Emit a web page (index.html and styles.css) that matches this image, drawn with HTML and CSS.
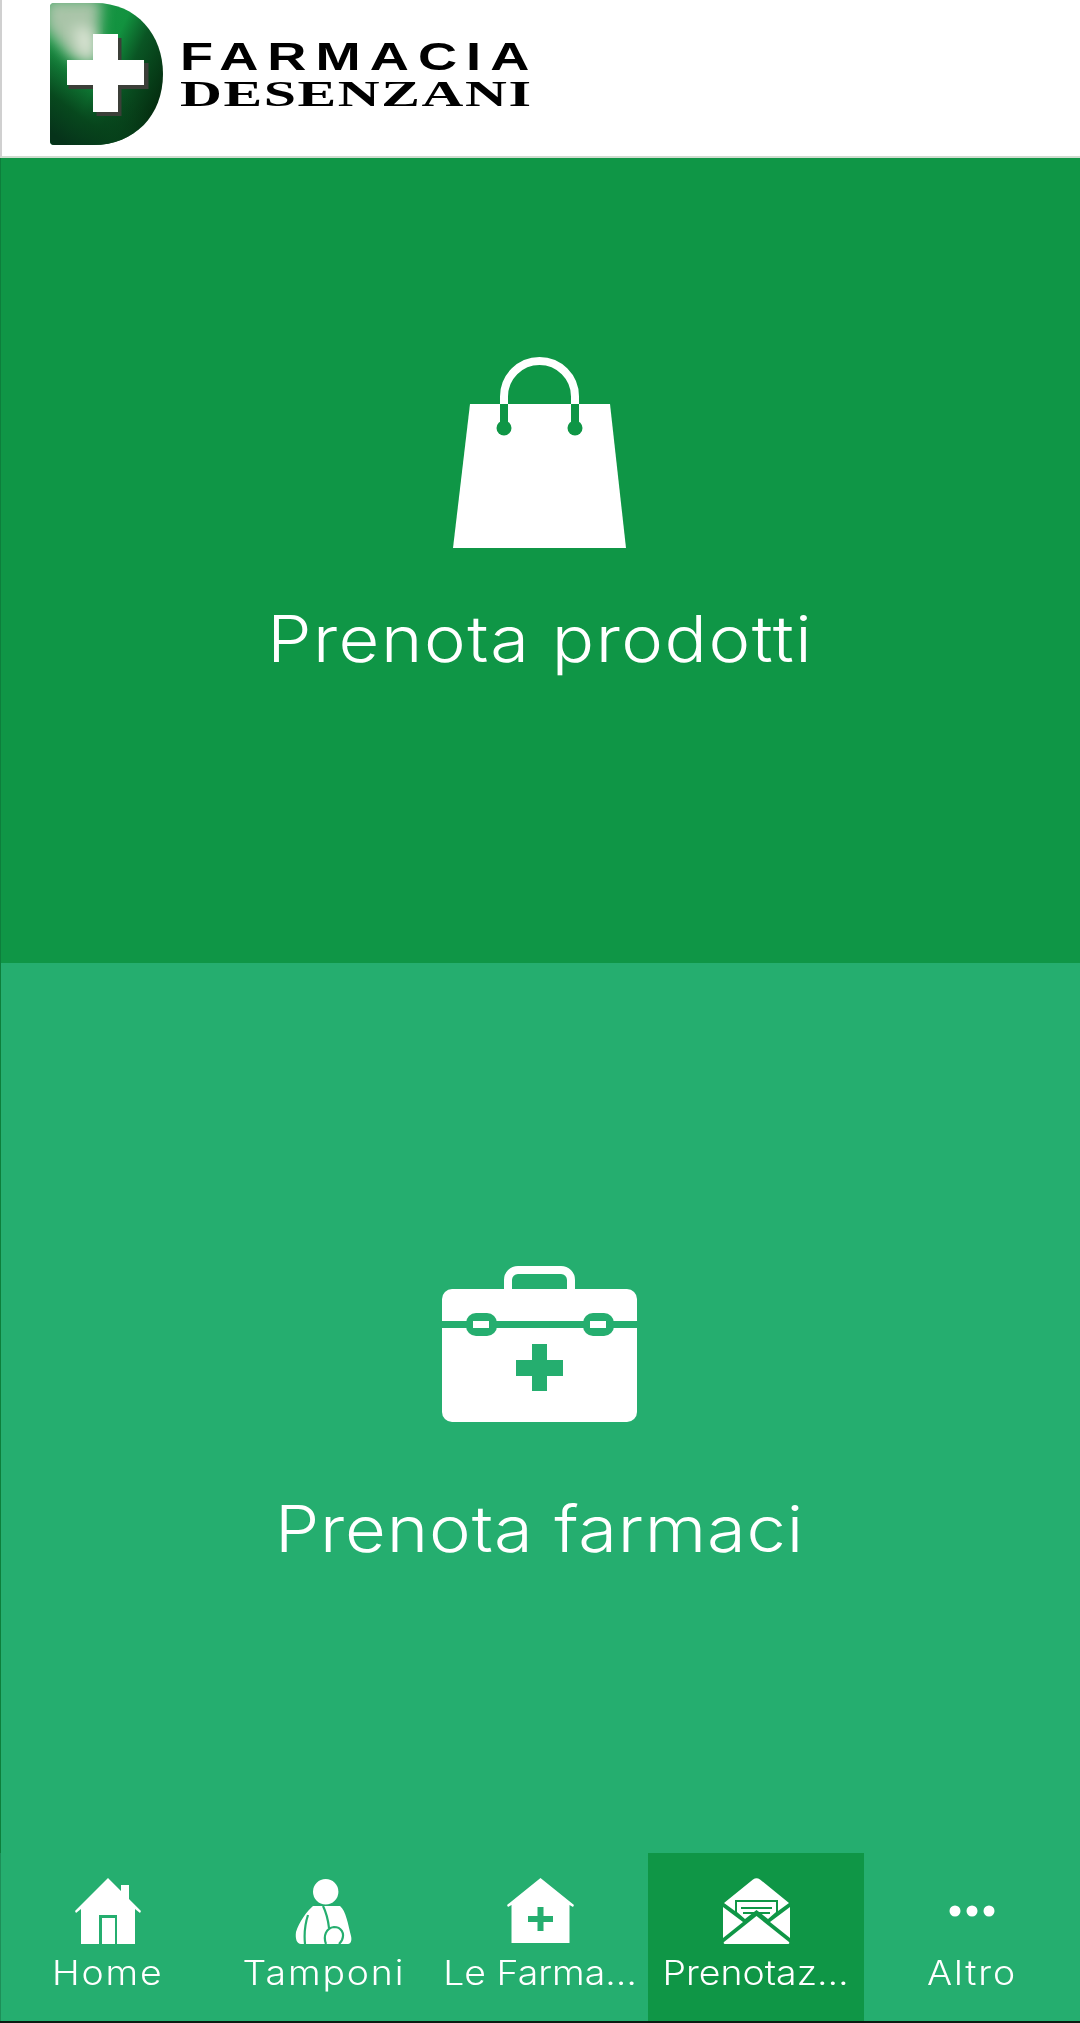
FILE: index.html
```html
<!DOCTYPE html>
<html lang="it">
<head>
    <meta charset="UTF-8">
    <meta name="viewport" content="width=device-width, initial-scale=1.0">
    <title>Farmacia Desenzani</title>
    <link rel="stylesheet" href="styles.css">
</head>
<body>
    <div class="app">
        <header class="top-bar">
            <svg class="logo-mark" viewBox="0 0 115 142">
                <defs>
                    <linearGradient id="dBase" x1="0" y1="0.1" x2="1" y2="0.7">
                        <stop offset="0" stop-color="#1c9a49"/>
                        <stop offset="0.5" stop-color="#12923f"/>
                        <stop offset="0.68" stop-color="#0a5524"/>
                        <stop offset="1" stop-color="#042a0e"/>
                    </linearGradient>
                    <linearGradient id="dFoot" x1="0.45" y1="0.5" x2="0.15" y2="1">
                        <stop offset="0" stop-color="#06401a" stop-opacity="0"/>
                        <stop offset="0.6" stop-color="#06401a" stop-opacity="0.9"/>
                        <stop offset="1" stop-color="#06331a"/>
                    </linearGradient>
                    <clipPath id="dClip">
                        <path d="M1 4a4 4 0 0 1 4-4H46C88 0 114 32 114 71C114 112 86 142 44 142H5a4 4 0 0 1-4-4Z"/>
                    </clipPath>
                    <filter id="soft" x="-50%" y="-50%" width="200%" height="200%">
                        <feGaussianBlur stdDeviation="7"/>
                    </filter>
                </defs>
                <path d="M1 4a4 4 0 0 1 4-4H46C88 0 114 32 114 71C114 112 86 142 44 142H5a4 4 0 0 1-4-4Z" fill="url(#dBase)"/>
                <path d="M1 4a4 4 0 0 1 4-4H46C88 0 114 32 114 71C114 112 86 142 44 142H5a4 4 0 0 1-4-4Z" fill="url(#dFoot)"/>
                <g clip-path="url(#dClip)">
                    <path d="M-4 -4H52L48 62L22 56L-4 24Z" fill="#a9c4a8" filter="url(#soft)"/>
                    <path d="M24 22L44 28L44 60L30 50Z" fill="#dbe5d5" filter="url(#soft)"/>
                </g>
                <path d="M46 33V58H18V84H46V111H71V84H98V58H71V33Z" fill="#3b3f38" transform="translate(1.5 2)"/>
                <path d="M44 31V57H18V82H44V109H69V82H95V57H69V31Z" fill="#fff"/>
            </svg>
            <div class="logo-text">
                <span class="logo-line1">FARMACIA</span>
                <span class="logo-line2">DESENZANI</span>
            </div>
        </header>

        <main class="panels">
            <a class="panel panel-products">
                <svg class="bag-icon" viewBox="0 0 173 191">
                    <path d="M17 47H157L173 191H0Z" fill="#fff"/>
                    <path d="M51 47V39.5A35.5 35.5 0 0 1 122 39.5V47" fill="none" stroke="#fff" stroke-width="8"/>
                    <rect x="47" y="47" width="8" height="24" fill="#0f9646"/>
                    <rect x="118" y="47" width="8" height="24" fill="#0f9646"/>
                    <circle cx="51" cy="71" r="7.5" fill="#0f9646"/>
                    <circle cx="122" cy="71" r="7.5" fill="#0f9646"/>
                </svg>
                <span class="panel-title">Prenota prodotti</span>
            </a>
            <a class="panel panel-drugs">
                <svg class="case-icon" viewBox="0 0 195 156">
                    <path d="M66 23V14a10 10 0 0 1 10-10H119a10 10 0 0 1 10 10V23" fill="none" stroke="#fff" stroke-width="8"/>
                    <rect y="23" width="195" height="133" rx="10" fill="#fff"/>
                    <rect y="55" width="195" height="7" fill="#25ae6f"/>
                    <rect x="24" y="47" width="31" height="23" rx="10" fill="#25ae6f"/>
                    <rect x="141" y="47" width="31" height="23" rx="10" fill="#25ae6f"/>
                    <rect x="31" y="55" width="16" height="7" fill="#fff"/>
                    <rect x="148" y="55" width="16" height="7" fill="#fff"/>
                    <path d="M90 78H105V94H121V110H105V125H90V110H74V94H90Z" fill="#25ae6f"/>
                </svg>
                <span class="panel-title">Prenota farmaci</span>
            </a>
        </main>

        <nav class="tabs">
            <a class="tab">
                <svg class="tab-icon" viewBox="0 0 66 66">
                    <path d="M33 0L46 13V7H54V21L66 33L65 35L60 31V66H6V31L1 35L0 33Z" fill="#fff"/>
                    <path d="M24 66V37H42V66H40V40H27V66Z" fill="#25ae6f"/>
                </svg>
                <span class="tab-label">Home</span>
            </a>
            <a class="tab">
                <svg class="tab-icon" viewBox="0 0 58 66">
                    <circle cx="30.7" cy="13.7" r="12.7" fill="#fff"/>
                    <path d="M18 28H45C51 33 53 46 56 58C57 62 56 66 53 66H6C2 66 0 61 1 54C4 44 12 33 18 28Z" fill="#fff"/>
                    <path d="M13 37C10 46 9 56 10 66" fill="none" stroke="#25ae6f" stroke-width="2.2"/>
                    <path d="M28 28C31 34 33 41 34 50" fill="none" stroke="#25ae6f" stroke-width="2.2"/>
                    <path d="M31 66C28 58 31 50 39 49C46 49 50 55 47 62C46 64 45 65 44 66" fill="none" stroke="#25ae6f" stroke-width="2.2"/>
                </svg>
                <span class="tab-label">Tamponi</span>
            </a>
            <a class="tab">
                <svg class="tab-icon" viewBox="0 0 67 66">
                    <path d="M33.5 0L67 27L66 29L62.5 27V65H4.5V27L1 29L0 27Z" fill="#fff"/>
                    <path d="M30.5 29H36.5V38H46V44H36.5V53H30.5V44H21V38H30.5Z" fill="#25ae6f"/>
                </svg>
                <span class="tab-label tab-label-cut">Le Farma…</span>
            </a>
            <a class="tab tab-active">
                <svg class="tab-icon" viewBox="0 0 67 66">
                    <path d="M30 1.5Q33.5 -1 37 1.5L66 25L55 33V22H12V33L1 25Z" fill="#fff"/>
                    <path d="M14 24H53V34L45 41L33.5 32L22 41L14 34Z" fill="#fff"/>
                    <path d="M18 30H49M20 35H47" stroke="#0f9646" stroke-width="2.2"/>
                    <path d="M0 29L20 44L0 60ZM67 29L47 44L67 60Z" fill="#fff"/>
                    <path d="M2 66Q0 66 1 64L33.5 38L66 64Q67 66 65 66Z" fill="#fff"/>
                </svg>
                <span class="tab-label tab-label-cut">Prenotaz…</span>
            </a>
            <a class="tab">
                <svg class="tab-icon" viewBox="0 0 46 66">
                    <circle cx="6" cy="33" r="5.5" fill="#fff"/>
                    <circle cx="23" cy="33" r="5.5" fill="#fff"/>
                    <circle cx="40" cy="33" r="5.5" fill="#fff"/>
                </svg>
                <span class="tab-label">Altro</span>
            </a>
        </nav>
    </div>
</body>
</html>
```

FILE: styles.css
```css
* {
    box-sizing: border-box;
}
body {
    margin: 0;
    font-family: Inter, "Open Sans", sans-serif;
    color: #fff;
}
.app {
    display: flex;
    flex-direction: column;
    height: 2023px;
    overflow: hidden;
    background: #25ae6f;
}
.top-bar {
    display: flex;
    align-items: flex-start;
    height: 158px;
    padding: 3px 0 0 47px;
    background: #fff;
    border-left: 2px solid #d0d0d0;
    border-bottom: 2px solid #cfdccf;
    color: #000;
}
.logo-mark {
    width: 115px;
    height: 142px;
}
.logo-text {
    display: flex;
    flex-direction: column;
    margin: 33px 0 0 16px;
}
.logo-line1 {
    font-family: "Liberation Sans", sans-serif;
    font-weight: 700;
    font-size: 39px;
    line-height: 42px;
    letter-spacing: 6.5px;
    transform: scaleX(1.39);
    transform-origin: left center;
}
.logo-line2 {
    font-family: "Liberation Serif", serif;
    font-weight: 700;
    font-size: 36px;
    line-height: 32px;
    letter-spacing: 1px;
    transform: scaleX(1.61);
    transform-origin: left center;
}
.panels {
    display: flex;
    flex-direction: column;
    flex: 1;
}
.panel {
    display: flex;
    flex-direction: column;
    align-items: center;
    box-shadow: inset 1px 0 0 #0d7f3b;
}
.panel-products {
    height: 805px;
    padding-top: 199px;
    background: #0f9646;
}
.panel-drugs {
    flex: 1;
    padding-top: 303px;
    background: #25ae6f;
}
.bag-icon {
    width: 173px;
    height: 191px;
    margin-right: 2px;
}
.case-icon {
    width: 195px;
    height: 156px;
    margin-right: 1px;
}
.panel-title {
    font-size: 64px;
    font-weight: 300;
    line-height: 80px;
    letter-spacing: 1.4px;
    margin-top: 51px;
    transform: scaleX(1.1);
}
.panel-drugs .panel-title {
    letter-spacing: 0.8px;
    margin-top: 67px;
}
.tabs {
    display: grid;
    grid-template-columns: repeat(5, 216px);
    height: 170px;
    border-bottom: 2px solid #0b1a12;
    box-shadow: inset 1px 0 0 #1d8f58;
}
.tab {
    display: flex;
    flex-direction: column;
    align-items: center;
    min-width: 0;
    padding-top: 25px;
}
.tab-active {
    background: #0f9646;
}
.tab-icon {
    height: 66px;
    display: block;
}
.tab-label {
    font-size: 34px;
    font-weight: 300;
    line-height: 44px;
    letter-spacing: 1.7px;
    margin-top: 7px;
    white-space: nowrap;
    transform: scaleX(1.1);
}
.tab-label-cut {
    letter-spacing: 0;
}
```
